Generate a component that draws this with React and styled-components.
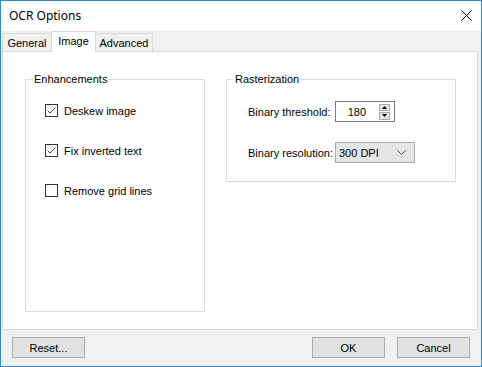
import React from 'react';
import styled, { createGlobalStyle } from 'styled-components';

const GlobalStyle = createGlobalStyle`
  html, body { margin: 0; padding: 0; background: #ffffff; }
  * { box-sizing: border-box; }
`;

const Window = styled.div`
  width: 482px;
  height: 367px;
  border: 1px solid #2b8ad8;
  background: #f0f0f0;
  display: flex;
  flex-direction: column;
  font-family: "Liberation Sans", Arial, sans-serif;
  font-size: 11px;
  color: #000;
`;

const TitleBar = styled.div`
  height: 30px;
  background: #ffffff;
  display: flex;
  align-items: center;
  justify-content: space-between;
  padding: 0 9px 1px 8px;
  font-family: "Noto Sans", sans-serif;
  font-size: 12px;
`;

const CloseIcon = () => (
  <svg width="11" height="11" viewBox="0 0 11 11">
    <path d="M0.5 0.5 L10.5 10.5 M10.5 0.5 L0.5 10.5" stroke="#000" strokeWidth="1" fill="none" />
  </svg>
);

const TabStrip = styled.div`
  height: 20px;
  display: flex;
  align-items: flex-end;
  padding-left: 1px;
`;

const Tab = styled.div`
  position: relative;
  width: ${p => p.$w}px;
  height: ${p => (p.$active ? 21 : 18)}px;
  margin-bottom: ${p => (p.$active ? -1 : 0)}px;
  background: ${p => (p.$active ? '#ffffff' : '#f0f0f0')};
  border: 1px solid #d9d9d9;
  border-bottom: none;
  ${p => p.$noLeft && 'border-left: none;'}
  ${p => p.$noRight && 'border-right: none;'}
  display: flex;
  align-items: center;
  justify-content: center;
  padding-bottom: ${p => (p.$active ? 3 : 0)}px;
  z-index: ${p => (p.$active ? 1 : 0)};
`;

const Page = styled.div`
  height: 279px;
  margin: 0 3px 0 1px;
  background: #ffffff;
  border: 1px solid #d9d9d9;
  padding: 21px 0 0 22px;
  display: flex;
  align-items: flex-start;
  gap: 21px;
`;

const Group = styled.fieldset`
  margin: 0;
  width: ${p => p.$w}px;
  height: ${p => p.$h}px;
  border: 1px solid #dcdcdc;
  padding: 0 0 0 7px;
  min-width: 0;
`;

const Legend = styled.legend`
  margin: 0;
  padding: 0 1px;
  line-height: 13px;
  font-size: 11px;
`;

const GroupBody = styled.div`
  display: flex;
  flex-direction: column;
  padding: ${p => p.$pad};
  gap: ${p => p.$gap}px;
`;

const CheckRow = styled.label`
  display: flex;
  align-items: center;
  height: 13px;
  gap: 6px;
`;

const Box = styled.span`
  width: 13px;
  height: 13px;
  border: 1px solid #333333;
  background: #ffffff;
  display: flex;
  align-items: center;
  justify-content: center;
`;

const CheckBox = ({ checked, children }) => (
  <CheckRow>
    <Box>
      {checked && (
        <svg width="11" height="11" viewBox="0 0 11 11">
          <path d="M1.5 5.5 L4 8 L9.5 2.5" stroke="#444" strokeWidth="1" fill="none" />
        </svg>
      )}
    </Box>
    {children}
  </CheckRow>
);

const FieldRow = styled.div`
  display: flex;
  align-items: center;
  height: 21px;
`;

const FieldLabel = styled.span`
  width: 87px;
  flex: none;
`;

const Numeric = styled.div`
  width: 60px;
  height: 21px;
  border: 1px solid #7a7a7a;
  background: #ffffff;
  display: flex;
  align-items: center;
  padding-right: 4px;
`;

const NumValue = styled.span`
  flex: 1;
  text-align: right;
  padding-right: 13px;
`;

const Spinner = styled.div`
  width: 11px;
  height: 16px;
  display: flex;
  flex-direction: column;
  gap: 1px;
`;

const SpinButton = styled.div`
  flex: 1;
  background: #e6e6e6;
  border: 1px solid #acacac;
  display: flex;
  align-items: center;
  justify-content: center;
`;

const Arrow = ({ up }) => (
  <svg width="5" height="3" viewBox="0 0 5 3">
    <path d={up ? 'M0 3 L2.5 0 L5 3 Z' : 'M0 0 L5 0 L2.5 3 Z'} fill="#000" />
  </svg>
);

const Combo = styled.div`
  width: 80px;
  height: 21px;
  border: 1px solid #acacac;
  background: #e5e5e5;
  display: flex;
  align-items: center;
  justify-content: space-between;
  padding: 0 8px 0 3px;
`;

const Chevron = () => (
  <svg width="9" height="5" viewBox="0 0 9 5">
    <path d="M0.5 0.5 L4.5 4.5 L8.5 0.5" stroke="#444" strokeWidth="1" fill="none" />
  </svg>
);

const Footer = styled.div`
  flex: 1;
  display: flex;
  align-items: flex-start;
  padding: 7px 11px 0 11px;
  gap: 12px;
`;

const Button = styled.button`
  width: 73px;
  height: 21px;
  margin: 0;
  padding: 0;
  border: 1px solid #adadad;
  background: #e1e1e1;
  font-family: "Liberation Sans", Arial, sans-serif;
  font-size: 11px;
  color: #000;
  ${p => p.$push && 'margin-left: auto;'}
`;

export default function App() {
  return (
    <>
      <GlobalStyle />
      <Window>
        <TitleBar>
          <span>OCR Options</span>
          <CloseIcon />
        </TitleBar>
        <TabStrip>
          <Tab $w={49} $noRight>General</Tab>
          <Tab $w={45} $active>Image</Tab>
          <Tab $w={57} $noLeft>Advanced</Tab>
        </TabStrip>
        <Page>
          <Group $w={180} $h={239}>
            <Legend>Enhancements</Legend>
            <GroupBody $pad="18px 0 0 12px" $gap={27}>
              <CheckBox checked>Deskew image</CheckBox>
              <CheckBox checked>Fix inverted text</CheckBox>
              <CheckBox>Remove grid lines</CheckBox>
            </GroupBody>
          </Group>
          <Group $w={230} $h={109}>
            <Legend>Rasterization</Legend>
            <GroupBody $pad="15px 0 0 14px" $gap={20}>
              <FieldRow>
                <FieldLabel>Binary threshold:</FieldLabel>
                <Numeric>
                  <NumValue>180</NumValue>
                  <Spinner>
                    <SpinButton><Arrow up /></SpinButton>
                    <SpinButton><Arrow /></SpinButton>
                  </Spinner>
                </Numeric>
              </FieldRow>
              <FieldRow>
                <FieldLabel>Binary resolution:</FieldLabel>
                <Combo>
                  <span>300 DPI</span>
                  <Chevron />
                </Combo>
              </FieldRow>
            </GroupBody>
          </Group>
        </Page>
        <Footer>
          <Button>Reset...</Button>
          <Button $push>OK</Button>
          <Button>Cancel</Button>
        </Footer>
      </Window>
    </>
  );
}
